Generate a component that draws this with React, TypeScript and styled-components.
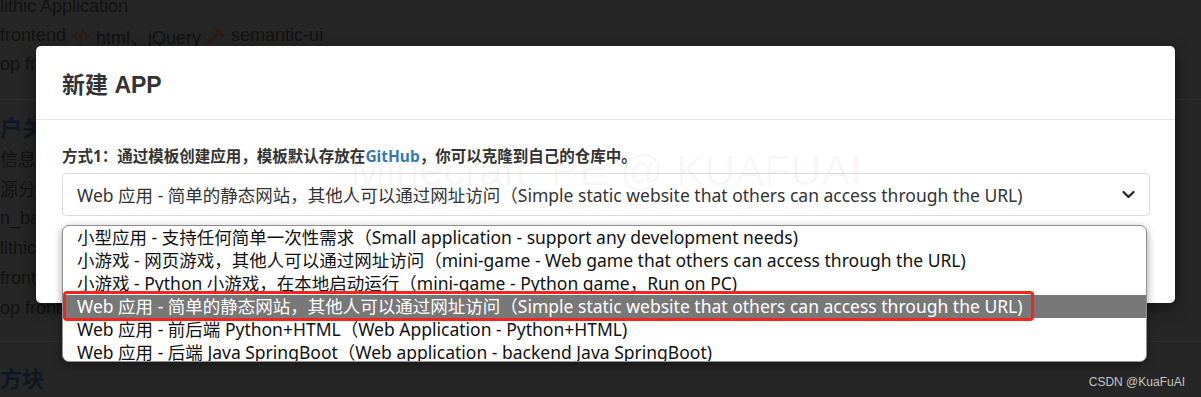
import React from "react";
import styled, { createGlobalStyle } from "styled-components";
import { FaCode, FaHammer } from "react-icons/fa";

const GlobalStyle = createGlobalStyle`
  html, body {
    margin: 0;
    padding: 0;
    background: #262626;
    overflow: hidden;
  }
`;

const Screen = styled.div`
  position: relative;
  width: 1201px;
  height: 397px;
  overflow: hidden;
  background: #262626;
`;

/* page behind the dimmed backdrop */
const Backdrop = styled.div`
  margin-top: -8px;
  font-family: "Liberation Sans", Arial, "Noto Sans CJK SC", sans-serif;
  font-size: 18px;
  color: #121212;
`;

const BgLine = styled.div<{ $h?: number }>`
  display: flex;
  align-items: center;
  gap: 6px;
  height: ${(p) => p.$h ?? 29}px;
  white-space: nowrap;
`;

const BgHeading = styled.div<{ $mt: number }>`
  margin-top: ${(p) => p.$mt}px;
  height: 28px;
  line-height: 28px;
  font-size: 22px;
  font-weight: bold;
  color: #0e1824;
  white-space: nowrap;
`;

const BgRule = styled.div<{ $mt: number }>`
  margin-top: ${(p) => p.$mt}px;
  border-top: 1px solid #2f2f2f;
`;

const BgIcon = styled.span`
  display: inline-flex;
  color: #2f1b10;
  font-size: 18px;
`;

const Modal = styled.div`
  position: absolute;
  left: 36px;
  top: 46px;
  width: 1139px;
  height: 257px;
  background: #fff;
  border-radius: 5px;
  box-shadow: 0 5px 15px rgba(0, 0, 0, 0.5);
  font-family: "Liberation Sans", Arial, "Noto Sans CJK SC", sans-serif;
  color: #333;
`;

const ModalHeader = styled.div`
  height: 73px;
  display: flex;
  align-items: center;
  padding: 0 26px;
  border-bottom: 1px solid #e5e5e5;
`;

const Title = styled.h4`
  margin: 0;
  font-size: 23px;
  font-weight: bold;
  color: #333;
`;

const ModalBody = styled.div`
  padding: 26px 25px 0 26px;
`;

const Label = styled.div`
  font-size: 15.5px;
  line-height: 20px;
  font-weight: bold;
  font-family: "Noto Sans", "Noto Sans CJK SC", sans-serif;
`;

const Link = styled.span`
  color: #337ab7;
`;

const Select = styled.div`
  margin-top: 7px;
  height: 43px;
  box-sizing: border-box;
  border: 1px solid #dcdcdc;
  border-radius: 4px;
  padding: 0 14px;
  display: flex;
  align-items: center;
  justify-content: space-between;
  font-family: "Noto Sans", "Noto Sans CJK SC", sans-serif;
  font-size: 17.5px;
  color: #333;
`;

const Watermark = styled.div`
  position: absolute;
  left: 350px;
  top: 146px;
  font-family: "Liberation Sans", Arial, sans-serif;
  font-size: 43px;
  color: rgba(0, 0, 0, 0.04);
  white-space: nowrap;
  pointer-events: none;
`;

const ListBox = styled.div`
  position: absolute;
  left: 62px;
  top: 225px;
  width: 1085px;
  height: 137px;
  box-sizing: border-box;
  background: #fff;
  border: 1px solid #8f8f8f;
  border-radius: 7px;
  box-shadow: 0 3px 8px rgba(0, 0, 0, 0.4);
  overflow: hidden;
  font-family: "Noto Sans", "Noto Sans CJK SC", sans-serif;
  font-size: 17.5px;
`;

const Option = styled.div<{ $selected?: boolean }>`
  height: 23px;
  line-height: 23px;
  padding-left: 14px;
  white-space: nowrap;
  color: ${(p) => (p.$selected ? "#fff" : "#111")};
  background: ${(p) => (p.$selected ? "#787878" : "transparent")};
`;

const Marked = styled.span`
  position: relative;
  &::after {
    content: "";
    position: absolute;
    left: -14px;
    right: -11px;
    top: -3px;
    bottom: -3px;
    border: 3px solid #f3261d;
    border-radius: 4px;
  }
`;

const Credit = styled.div`
  position: absolute;
  right: 16px;
  top: 375px;
  font-family: "Liberation Sans", Arial, sans-serif;
  font-size: 12px;
  color: #c4c4c4;
`;

const options = [
  "小型应用 - 支持任何简单一次性需求（Small application - support any development needs)",
  "小游戏 - 网页游戏，其他人可以通过网址访问（mini-game - Web game that others can access through the URL)",
  "小游戏 - Python 小游戏，在本地启动运行（mini-game - Python game，Run on PC)",
  "Web 应用 - 简单的静态网站，其他人可以通过网址访问（Simple static website that others can access through the URL)",
  "Web 应用 - 前后端 Python+HTML（Web Application - Python+HTML)",
  "Web 应用 - 后端 Java SpringBoot（Web application - backend Java SpringBoot)",
];

const selectedIndex = 3;

function FrontendLine() {
  return (
    <BgLine>
      frontend
      <BgIcon>
        <FaCode />
      </BgIcon>
      html、jQuery
      <BgIcon>
        <FaHammer />
      </BgIcon>
      semantic-ui
    </BgLine>
  );
}

export default function App() {
  return (
    <>
      <GlobalStyle />
      <Screen>
        <Backdrop>
          <BgLine>lithic Application</BgLine>
          <FrontendLine />
          <BgLine>op frontend</BgLine>
          <BgRule $mt={20} />
          <BgHeading $mt={15}>户关系</BgHeading>
          <BgLine $h={30}>信息管理</BgLine>
          <BgLine $h={30}>源分支</BgLine>
          <BgLine $h={30}>n_backend</BgLine>
          <BgLine $h={30}>lithic Application</BgLine>
          <BgLine $h={30}>
            frontend
            <BgIcon>
              <FaCode />
            </BgIcon>
          </BgLine>
          <BgLine $h={30}>op frontend</BgLine>
          <BgRule $mt={18} />
          <BgHeading $mt={24}>方块</BgHeading>
          <BgLine>地小游戏</BgLine>
        </Backdrop>

        <Modal>
          <ModalHeader>
            <Title>新建 APP</Title>
          </ModalHeader>
          <ModalBody>
            <Label>
              方式1：通过模板创建应用，模板默认存放在<Link>GitHub</Link>，你可以克隆到自己的仓库中。
            </Label>
            <Select>
              <span>{options[selectedIndex]}</span>
              <svg width="13" height="9" viewBox="0 0 13 9">
                <polyline
                  points="1.5,2 6.5,7 11.5,2"
                  fill="none"
                  stroke="#222"
                  strokeWidth="2.2"
                  strokeLinecap="round"
                  strokeLinejoin="round"
                />
              </svg>
            </Select>
          </ModalBody>
        </Modal>

        <Watermark>Minecraft_PE @ KUAFUAI</Watermark>

        <ListBox>
          {options.map((text, i) => (
            <Option key={i} $selected={i === selectedIndex}>
              {i === selectedIndex ? <Marked>{text}</Marked> : text}
            </Option>
          ))}
        </ListBox>

        <Credit>CSDN @KuaFuAI</Credit>
      </Screen>
    </>
  );
}
